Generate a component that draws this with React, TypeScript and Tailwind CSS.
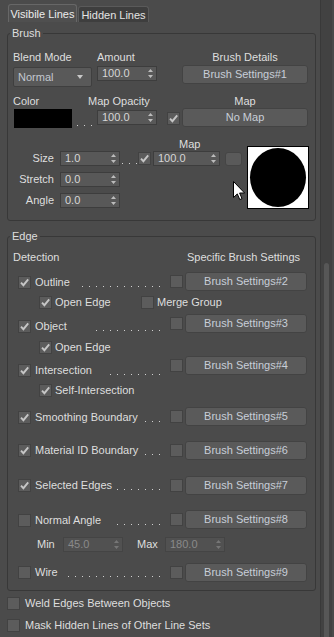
import React from "react";

const Check = ({ checked = false, className = "" }: { checked?: boolean; className?: string }) => (
  <div
    className={`w-[13px] h-[13px] shrink-0 bg-[#5c5c5c] border border-[#424242] flex items-center justify-center ${className}`}
  >
    {checked && (
      <svg width="9" height="9" viewBox="0 0 9 9">
        <path d="M1 4.6 L3.4 7.2 L8.2 1.4" fill="none" stroke="#c6c6c6" strokeWidth="1.9" />
      </svg>
    )}
  </div>
);

const Spin = ({
  value,
  w,
  disabled = false,
  className = "",
}: {
  value: string;
  w: string;
  disabled?: boolean;
  className?: string;
}) => (
  <div
    className={`${w} h-[15px] shrink-0 flex items-center justify-between pl-[4px] pr-[3px] border ${
      disabled ? "bg-[#515151] border-[#444444] text-[#8a8a8a]" : "bg-[#585858] border-[#3d3d3d] text-[#d6d6d6]"
    } ${className}`}
  >
    <span className="leading-none">{value}</span>
    <svg width="5" height="9" viewBox="0 0 5 9">
      <path d="M2.5 0 L5 3 L0 3Z M0 6 L5 6 L2.5 9Z" fill={disabled ? "#767676" : "#bcbcbc"} />
    </svg>
  </div>
);

const Btn = ({ children, className = "" }: { children: React.ReactNode; className?: string }) => (
  <div
    className={`h-[19px] shrink-0 rounded-[3px] bg-[#5a5a5a] border border-[#434343] flex items-center justify-center text-[#c8ced8] ${className}`}
  >
    {children}
  </div>
);

const Dots = ({ n, className = "" }: { n: number; className?: string }) => (
  <div className={`flex gap-[6px] ${className}`}>
    {Array.from({ length: n }).map((_, i) => (
      <div key={i} className="w-[1px] h-[1px] bg-[#d0d0d0]" />
    ))}
  </div>
);

const EdgeRow = ({
  label,
  checked,
  n,
  mt,
  leftMt,
  btn,
}: {
  label: string;
  checked: boolean;
  n: number;
  mt: string;
  leftMt: string;
  btn: string;
}) => (
  <div className={`flex items-start h-[19px] ${mt}`}>
    <div className={`w-[162px] h-[13px] flex items-end justify-between pr-[10px] ${leftMt}`}>
      <div className="flex items-center ml-[10px] h-[13px]">
        <Check checked={checked} />
        <span className="ml-[4px] leading-[13px] whitespace-nowrap">{label}</span>
      </div>
      <Dots n={n} className="mb-[2px]" />
    </div>
    <Check className="mt-[3px]" />
    <Btn className="ml-[2px] w-[122px]">{btn}</Btn>
  </div>
);

const SubRow = ({ label, mt }: { label: string; mt: string }) => (
  <div className={`flex items-center h-[13px] ${mt}`}>
    <div className="ml-[31px] flex items-center">
      <Check checked />
      <span className="ml-[3px] leading-[13px]">{label}</span>
    </div>
  </div>
);

export default function App() {
  return (
    <div className="relative w-[334px] h-[637px] overflow-hidden bg-[#4b4b4b] flex font-['Liberation_Sans',Arial,sans-serif] text-[11px] text-[#dedede]">
      <div className="w-[320px] flex flex-col">
        {/* tabs */}
        <div className="flex items-end h-[22px] pl-[8px] gap-[1px]">
          <div className="w-[69px] h-[18px] rounded-t-[3px] border border-b-0 border-[#676767] bg-[#4f4f4f] text-[#ececec] flex items-center justify-center leading-[14px]">
            Visibile Lines
          </div>
          <div className="w-[71px] h-[16px] rounded-t-[3px] border border-b-0 border-[#5a5a5a] bg-[#3e3e3e] text-[#e4e4e4] flex items-center justify-center leading-[14px]">
            Hidden Lines
          </div>
        </div>

        {/* Brush group */}
        <fieldset className="ml-[7px] mt-[4px] w-[309px] border border-[#383838] rounded-[3px] pb-[11px]">
          <legend className="ml-[2px] px-[2px] leading-[14px]">Brush</legend>
          <div className="flex mt-[10px] h-[14px] leading-[14px]">
            <span className="ml-[5px] w-[84px]">Blend Mode</span>
            <span className="w-[85px]">Amount</span>
            <span className="w-[126px] text-center">Brush Details</span>
          </div>
          <div className="flex items-start mt-[1px] h-[22px]">
            <div className="ml-[5px] mt-[2px] w-[79px] h-[20px] bg-[#595959] border border-[#3f3f3f] rounded-[2px] flex items-center justify-between pl-[4px] pr-[8px] text-[#c3c8d0]">
              <span>Normal</span>
              <svg width="6" height="4" viewBox="0 0 6 4">
                <path d="M0 0 L6 0 L3 4Z" fill="#c8c8c8" />
              </svg>
            </div>
            <Spin value="100.0" w="w-[60px]" className="ml-[5px] mt-[1px]" />
            <Btn className="ml-[25px] w-[126px]">Brush Settings#1</Btn>
          </div>
          <div className="flex mt-[7px] h-[14px] leading-[14px]">
            <span className="ml-[5px] w-[75px]">Color</span>
            <span className="w-[94px]">Map Opacity</span>
            <span className="w-[126px] text-center">Map</span>
          </div>
          <div className="flex items-start h-[20px]">
            <div className="ml-[6px] mt-[1px] w-[58px] h-[19px] bg-black" />
            <div className="w-[25px] pl-[5px] mt-[17px]">
              <Dots n={3} />
            </div>
            <Spin value="100.0" w="w-[60px]" className="mt-[2px]" />
            <Check checked className="ml-[10px] mt-[4px]" />
            <Btn className="ml-[2px] w-[126px]">No Map</Btn>
          </div>
          <div className="flex items-start">
            <div className="w-[234px] pt-[10px] flex flex-col">
              <div className="h-[13px] leading-[13px] ml-[171px]">Map</div>
              <div className="flex items-center h-[15px]">
                <span className="w-[46px] text-right">Size</span>
                <Spin value="1.0" w="w-[60px]" className="ml-[6px]" />
                <div className="w-[18px] pl-[2px] self-end mb-[2px]">
                  <Dots n={3} />
                </div>
                <Check checked />
                <Spin value="100.0" w="w-[67px]" className="ml-[2px]" />
                <div className="ml-[5px] w-[17px] h-[14px] rounded-[3px] bg-[#5a5a5a] border border-[#454545]" />
              </div>
              <div className="flex items-center h-[15px] mt-[6px]">
                <span className="w-[46px] text-right">Stretch</span>
                <Spin value="0.0" w="w-[60px]" className="ml-[6px]" />
              </div>
              <div className="flex items-center h-[15px] mt-[6px]">
                <span className="w-[46px] text-right">Angle</span>
                <Spin value="0.0" w="w-[60px]" className="ml-[6px]" />
              </div>
            </div>
            <div className="ml-[5px] mt-[18px] w-[62px] h-[63px] border border-black bg-white flex items-center justify-center">
              <svg width="58" height="61" viewBox="0 0 58 61">
                <ellipse cx="29" cy="30.5" rx="28" ry="29.5" fill="black" />
              </svg>
            </div>
          </div>
        </fieldset>

        {/* Edge group */}
        <fieldset className="ml-[7px] mt-[8px] w-[309px] border border-[#383838] rounded-[3px] pb-[8px]">
          <legend className="ml-[2px] px-[2px] leading-[14px]">Edge</legend>
          <div className="flex mt-[7px] h-[14px] leading-[14px]">
            <span className="ml-[5px] w-[167px]">Detection</span>
            <span className="w-[127px] text-center">Specific Brush Settings</span>
          </div>
          <EdgeRow label="Outline" checked n={12} mt="mt-[8px]" leftMt="mt-[4px]" btn="Brush Settings#2" />
          <div className="flex items-center h-[13px] mt-[5px]">
            <div className="ml-[31px] w-[102px] flex items-center">
              <Check checked />
              <span className="ml-[3px] leading-[13px]">Open Edge</span>
            </div>
            <Check />
            <span className="ml-[3px] leading-[13px]">Merge Group</span>
          </div>
          <EdgeRow label="Object" checked n={10} mt="mt-[5px]" leftMt="mt-[6px]" btn="Brush Settings#3" />
          <SubRow label="Open Edge" mt="mt-[8px]" />
          <EdgeRow label="Intersection" checked n={8} mt="mt-[2px]" leftMt="mt-[8px]" btn="Brush Settings#4" />
          <SubRow label="Self-Intersection" mt="mt-[9px]" />
          <EdgeRow label="Smoothing Boundary" checked n={3} mt="mt-[10px]" leftMt="mt-[4px]" btn="Brush Settings#5" />
          <EdgeRow label="Material ID Boundary" checked n={3} mt="mt-[15px]" leftMt="mt-[3px]" btn="Brush Settings#6" />
          <EdgeRow label="Selected Edges" checked n={7} mt="mt-[16px]" leftMt="mt-[3px]" btn="Brush Settings#7" />
          <EdgeRow label="Normal Angle" checked={false} n={7} mt="mt-[15px]" leftMt="mt-[4px]" btn="Brush Settings#8" />
          <div className="flex items-center h-[14px] mt-[8px]">
            <span className="ml-[29px] w-[26px]">Min</span>
            <Spin value="45.0" w="w-[60px]" disabled />
            <span className="ml-[14px] w-[28px]">Max</span>
            <Spin value="180.0" w="w-[60px]" disabled />
          </div>
          <EdgeRow label="Wire" checked={false} n={14} mt="mt-[12px]" leftMt="mt-[3px]" btn="Brush Settings#9" />
        </fieldset>

        <div className="flex items-center h-[13px] mt-[6px] ml-[7px]">
          <Check />
          <span className="ml-[5px] leading-[13px]">Weld Edges Between Objects</span>
        </div>
        <div className="flex items-center h-[13px] mt-[9px] ml-[7px]">
          <Check />
          <span className="ml-[5px] leading-[13px]">Mask Hidden Lines of Other Line Sets</span>
        </div>
      </div>

      {/* scrollbar */}
      <div className="w-[14px] h-full flex">
        <div className="w-[12px] h-full border-l border-[#393939] bg-[#424242] flex flex-col items-center pt-[263px]">
          <div className="w-[5px] flex-1 rounded-t-[3px] bg-[#575757]" />
        </div>
        <div className="w-[2px] h-full bg-[#4a4a4a]" />
      </div>

      {/* mouse cursor */}
      <svg className="absolute left-[233px] top-[181px]" width="13" height="20" viewBox="0 0 13 20">
        <path
          d="M0.5 0.5 L0.5 16.5 L4.3 12.9 L6.8 18.6 L9 17.6 L6.6 12 L11.6 12 Z"
          fill="white"
          stroke="black"
          strokeWidth="1"
          strokeLinejoin="miter"
        />
      </svg>
    </div>
  );
}
